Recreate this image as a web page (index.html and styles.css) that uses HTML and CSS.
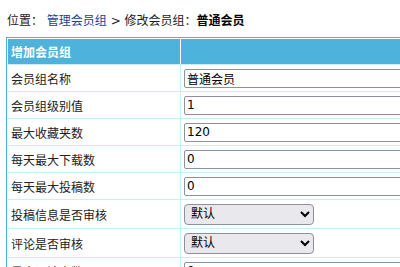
FILE: index.html
```html
<!DOCTYPE html>
<html lang="zh-CN">
<head>
    <meta charset="UTF-8">
    <title>修改会员组</title>
    <link rel="stylesheet" href="styles.css">
</head>
<body>
    <div class="crumb">
        位置： <a href="#">管理会员组</a> &gt; 修改会员组：<b>普通会员</b>
    </div>

    <form>
        <table class="form-table">
            <tr>
                <th class="col-label">增加会员组</th>
                <th></th>
            </tr>
            <tr>
                <td class="col-label">会员组名称</td>
                <td><input type="text" class="form-input" value="普通会员"></td>
            </tr>
            <tr>
                <td class="col-label">会员组级别值</td>
                <td><input type="text" class="form-input" value="1"></td>
            </tr>
            <tr>
                <td class="col-label">最大收藏夹数</td>
                <td><input type="text" class="form-input" value="120"></td>
            </tr>
            <tr>
                <td class="col-label">每天最大下载数</td>
                <td><input type="text" class="form-input" value="0"></td>
            </tr>
            <tr>
                <td class="col-label">每天最大投稿数</td>
                <td><input type="text" class="form-input" value="0"></td>
            </tr>
            <tr class="select-row">
                <td class="col-label">投稿信息是否审核</td>
                <td>
                    <select class="form-select">
                        <option>默认</option>
                        <option>是</option>
                        <option>否</option>
                    </select>
                </td>
            </tr>
            <tr class="select-row">
                <td class="col-label">评论是否审核</td>
                <td>
                    <select class="form-select">
                        <option>默认</option>
                        <option>是</option>
                        <option>否</option>
                    </select>
                </td>
            </tr>
            <tr>
                <td class="col-label">最大评论字数</td>
                <td><input type="text" class="form-input" value="0"></td>
            </tr>
        </table>
    </form>
</body>
</html>
```

FILE: styles.css
```css
body {
    margin: 0;
    font-family: "DejaVu Sans", "Noto Sans CJK SC", sans-serif;
    font-size: 12px;
    color: #222222;
    background: #ffffff;
}

.crumb {
    padding: 13px 7px 0;
    height: 24px;
    line-height: 16px;
    white-space: nowrap;
}

.crumb a {
    color: #1c3f94;
    text-decoration: none;
}

.crumb b {
    color: #000000;
}

.form-table {
    margin-left: 6px;
    width: 620px;
    border: 1px solid #4db3dd;
    padding: 1px;
    border-spacing: 0;
}

.form-table th {
    height: 25px;
    padding: 0 3px;
    background: #4db3dd;
    color: #ffffff;
    font-weight: bold;
    text-align: left;
}

.form-table th.col-label {
    border-right: 1px solid #ffffff;
}

.form-table td {
    height: 26px;
    padding: 0 3px;
    border-top: 1px solid #c9eefb;
    vertical-align: middle;
    white-space: nowrap;
}

.form-table td.col-label {
    border-right: 1px solid #c9eefb;
}

.col-label {
    width: 166px;
}

.form-table .select-row td {
    height: 28px;
}

.form-input {
    box-sizing: border-box;
    width: 330px;
    height: 19px;
    margin: 0;
    padding: 0 2px;
    border: 1px solid #8f8f9d;
    border-radius: 2px;
    font-family: "DejaVu Sans", "Noto Sans CJK SC", sans-serif;
    font-size: 12px;
    color: #000000;
    vertical-align: middle;
}

.form-select {
    box-sizing: border-box;
    width: 130px;
    height: 21px;
    margin: 0;
    padding: 0 2px;
    border: 1px solid #8f8f9d;
    border-radius: 4px;
    background-color: #e9e9ed;
    font-family: "DejaVu Sans", "Noto Sans CJK SC", sans-serif;
    font-size: 12px;
    color: #000000;
    vertical-align: middle;
}
```
